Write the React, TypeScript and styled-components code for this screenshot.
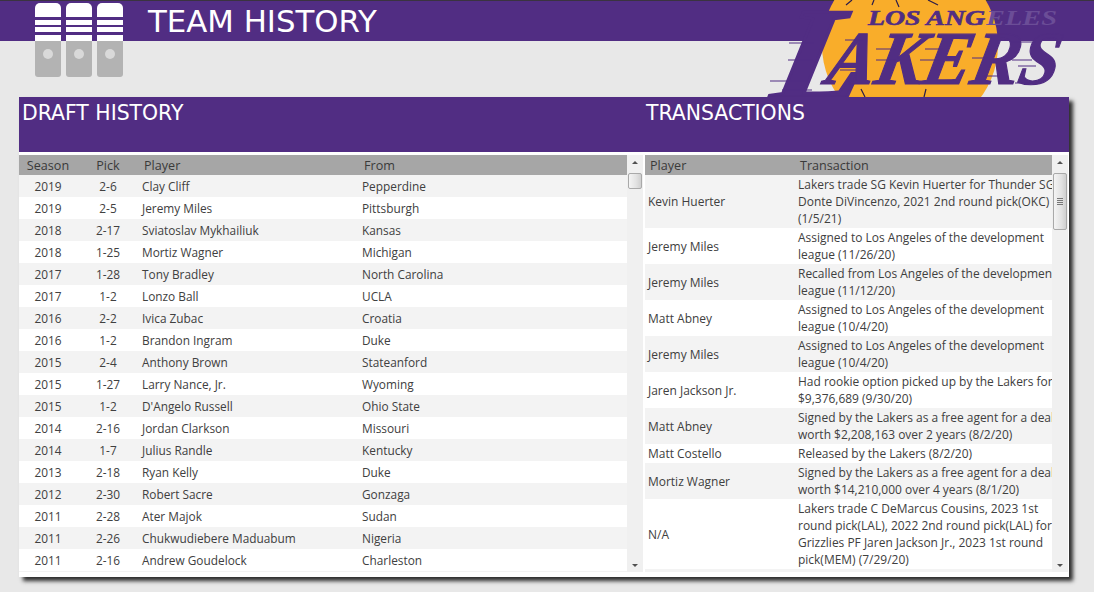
import React from "react";
import styled, { createGlobalStyle } from "styled-components";

const PURPLE = "#512d83";
const FAINT = "#6b4d97";
const TEXT = "#404040";

const Global = createGlobalStyle`
  html, body { margin: 0; padding: 0; background: #e8e8e8; }
  body { width: 1094px; height: 592px; overflow: hidden; font-family: "Open Sans", "Liberation Sans", sans-serif; color: ${TEXT}; }
`;

const Page = styled.div`
  position: relative;
  width: 1094px;
  height: 592px;
  overflow: hidden;
`;

const TopBar = styled.header`
  box-sizing: border-box;
  height: 41px;
  background: ${PURPLE};
  border-top: 1px solid #3a3340;
  padding-left: 148px;
  display: flex;
  align-items: flex-start;
`;

const PageTitle = styled.h1`
  margin: 0;
  font-family: "DejaVu Sans", "Open Sans", sans-serif;
  font-weight: 400;
  font-size: 30.8px;
  line-height: 40px;
  color: #fff;
`;

const IconWrap = styled.div`
  position: absolute;
  left: 35px;
  top: 3px;
  width: 89px;
  height: 74px;
`;

const LogoWrap = styled.div`
  position: absolute;
  left: 760px;
  top: 0;
  width: 334px;
  height: 110px;
`;

const Panel = styled.main`
  position: relative;
  box-sizing: border-box;
  margin: 56px 0 0 19px;
  width: 1050px;
  height: 480px;
  background: #fff;
  box-shadow: 4px 4px 4px #2e2e2e;
`;

const Band = styled.div`
  display: grid;
  grid-template-columns: 626px 1fr;
  height: 55px;
  margin-bottom: 3px;
  background: ${PURPLE};
`;

const BandTitle = styled.h2<{ $pad: number }>`
  margin: 0;
  padding-left: ${(p) => p.$pad}px;
  font-family: "DejaVu Sans", "Open Sans", sans-serif;
  font-weight: 400;
  font-size: 20.4px;
  line-height: 32px;
  color: #fff;
`;

const Tables = styled.div`
  display: grid;
  grid-template-columns: 624px 2px 423px;
  height: 417px;
`;

const Section = styled.section`
  display: flex;
  height: 417px;
  overflow: hidden;
`;

const TableArea = styled.div`
  flex: 1;
  min-width: 0;
  overflow: hidden;
`;

const HeadRow = styled.div<{ $cols: string }>`
  display: grid;
  grid-template-columns: ${(p) => p.$cols};
  height: 20px;
  background: #a6a6a6;
  font-size: 12.6px;
  line-height: 21px;
  color: #3a3a3a;
`;

const HeadCell = styled.div<{ $center?: boolean }>`
  padding-left: ${(p) => (p.$center ? 0 : 5)}px;
  text-align: ${(p) => (p.$center ? "center" : "left")};
`;

const Row = styled.div<{ $cols: string; $alt: boolean }>`
  display: grid;
  grid-template-columns: ${(p) => p.$cols};
  align-items: center;
  background: ${(p) => (p.$alt ? "#f3f3f3" : "#fff")};
  line-height: 17px;
  color: ${TEXT};
  overflow: hidden;
`;

const DraftRow = styled(Row)`
  height: 22px;
  font-size: 11.85px;
`;

const TxRow = styled(Row)`
  padding: 1px 0;
  font-size: 11.97px;
`;

const Cell = styled.div<{ $center?: boolean }>`
  padding-left: ${(p) => (p.$center ? 0 : 3)}px;
  text-align: ${(p) => (p.$center ? "center" : "left")};
  white-space: nowrap;
  overflow: hidden;
`;

const Line = styled.div`
  white-space: nowrap;
`;

const Filler = styled.div<{ $h: number }>`
  height: ${(p) => p.$h}px;
  background: #f3f3f3;
`;

const Track = styled.div`
  position: relative;
  flex: 0 0 16px;
  height: 417px;
  background: #f0f0f0;
`;

const Arrow = styled.div<{ $down?: boolean }>`
  position: absolute;
  ${(p) => (p.$down ? "bottom: 5px;" : "top: 6px;")}
  left: 5px;
  width: 0;
  height: 0;
  border-left: 3px solid transparent;
  border-right: 3px solid transparent;
  ${(p) => (p.$down ? "border-top: 3px solid #505050;" : "border-bottom: 3px solid #505050;")}
`;

const Thumb = styled.div<{ $h: number }>`
  position: absolute;
  top: 18px;
  left: 1px;
  box-sizing: border-box;
  width: 14px;
  height: ${(p) => p.$h}px;
  border: 1px solid #a9a9a9;
  border-radius: 2px;
  background: linear-gradient(to right, #f4f4f4, #e2e2e2 60%, #cfcfcf);
  display: flex;
  flex-direction: column;
  justify-content: center;
  align-items: center;
  gap: 1px;
`;

const Grip = styled.span`
  display: block;
  width: 6px;
  height: 1px;
  background: #777;
`;

const draft: [string, string, string, string][] = [
  ["2019", "2-6", "Clay Cliff", "Pepperdine"],
  ["2019", "2-5", "Jeremy Miles", "Pittsburgh"],
  ["2018", "2-17", "Sviatoslav Mykhailiuk", "Kansas"],
  ["2018", "1-25", "Mortiz Wagner", "Michigan"],
  ["2017", "1-28", "Tony Bradley", "North Carolina"],
  ["2017", "1-2", "Lonzo Ball", "UCLA"],
  ["2016", "2-2", "Ivica Zubac", "Croatia"],
  ["2016", "1-2", "Brandon Ingram", "Duke"],
  ["2015", "2-4", "Anthony Brown", "Stateanford"],
  ["2015", "1-27", "Larry Nance, Jr.", "Wyoming"],
  ["2015", "1-2", "D'Angelo Russell", "Ohio State"],
  ["2014", "2-16", "Jordan Clarkson", "Missouri"],
  ["2014", "1-7", "Julius Randle", "Kentucky"],
  ["2013", "2-18", "Ryan Kelly", "Duke"],
  ["2012", "2-30", "Robert Sacre", "Gonzaga"],
  ["2011", "2-28", "Ater Majok", "Sudan"],
  ["2011", "2-26", "Chukwudiebere Maduabum", "Nigeria"],
  ["2011", "2-16", "Andrew Goudelock", "Charleston"],
];

const tx: [string, string[]][] = [
  ["Kevin Huerter", ["Lakers trade SG Kevin Huerter for Thunder SG", "Donte DiVincenzo, 2021 2nd round pick(OKC)", "(1/5/21)"]],
  ["Jeremy Miles", ["Assigned to Los Angeles of the development", "league (11/26/20)"]],
  ["Jeremy Miles", ["Recalled from Los Angeles of the development", "league (11/12/20)"]],
  ["Matt Abney", ["Assigned to Los Angeles of the development", "league (10/4/20)"]],
  ["Jeremy Miles", ["Assigned to Los Angeles of the development", "league (10/4/20)"]],
  ["Jaren Jackson Jr.", ["Had rookie option picked up by the Lakers for", "$9,376,689 (9/30/20)"]],
  ["Matt Abney", ["Signed by the Lakers as a free agent for a deal", "worth $2,208,163 over 2 years (8/2/20)"]],
  ["Matt Costello", ["Released by the Lakers (8/2/20)"]],
  ["Mortiz Wagner", ["Signed by the Lakers as a free agent for a deal", "worth $14,210,000 over 4 years (8/1/20)"]],
  ["N/A", ["Lakers trade C DeMarcus Cousins, 2023 1st", "round pick(LAL), 2022 2nd round pick(LAL) for", "Grizzlies PF Jaren Jackson Jr., 2023 1st round", "pick(MEM) (7/29/20)"]],
];

const DRAFT_COLS = "58px 62px 220px 1fr";
const TX_COLS = "150px 257px";

const LockerIcon = () => (
  <svg width="89" height="74" viewBox="0 0 89 74">
    {[0, 31, 62].map((x) => (
      <g key={x}>
        <path d={`M${x} 38V5a5 5 0 0 1 5-5h16a5 5 0 0 1 5 5v33z`} fill="#fff" />
        <rect x={x} y="14" width="26" height="3" fill={PURPLE} />
        <rect x={x} y="22" width="26" height="2" fill={PURPLE} />
        <rect x={x} y="29" width="26" height="3" fill={PURPLE} />
        <path d={`M${x} 38h26v33a3 3 0 0 1-3 3H${x + 3}a3 3 0 0 1-3-3z`} fill="#b3b3b3" />
        <circle cx={x + 13} cy="51" r="5" fill="#d9d9d9" />
      </g>
    ))}
  </svg>
);

const speedOuter = [
  [29, 43, 25], [10, 81, 40], [22, 90, 30], [28, 60, 25],
  [85, 40, 18], [116, 49, 20], [116, 60, 20], [80, 70, 16], [165, 49, 18], [160, 60, 20],
  [212, 58, 16], [250, 42, 26], [252, 60, 20], [258, 66, 18], [224, 76, 16], [255, 83, 18],
];

const serif = "'Liberation Serif', serif";

const LakersLogo = () => (
  <svg width="334" height="110" viewBox="0 0 334 110">
    <circle cx="150" cy="45" r="88" fill="#f9ad2a" />
    <path d="M92 0l-6 5M114 0l-2 5M136 0l3 7M168 0l10 5M101 89l4 8M166 89l-2 8" stroke="#2c1d4a" strokeWidth="1.2" />
    <path d="M56 12h20M52 18h18" stroke={FAINT} strokeWidth="1.5" />
    <text x="108" y="25" fontFamily={serif} fontWeight="700" fontStyle="italic" fontSize="21"
      textLength="117" lengthAdjust="spacingAndGlyphs" fill={PURPLE} stroke={PURPLE} strokeWidth="0.6">LOS ANG</text>
    <text x="226" y="25" fontFamily={serif} fontWeight="700" fontStyle="italic" fontSize="21"
      textLength="71" lengthAdjust="spacingAndGlyphs" fill={FAINT}>ELES</text>
    <g transform="skewX(-12)">
      <text x="30" y="100" fontFamily={serif} fontWeight="700" fontStyle="italic" fontSize="134"
        textLength="90" lengthAdjust="spacingAndGlyphs" fill={PURPLE} stroke={PURPLE} strokeWidth="3">L</text>
      <text x="82" y="84" fontFamily={serif} fontWeight="700" fontStyle="italic" fontSize="76"
        textLength="232" lengthAdjust="spacingAndGlyphs" fill={PURPLE} stroke={PURPLE} strokeWidth="1.2">AKERS</text>
    </g>
    <g stroke={PURPLE} strokeWidth="1">
      {speedOuter.map(([x, y, w], i) => (
        <path key={i} d={`M${x} ${y}h${w}`} />
      ))}
    </g>
  </svg>
);

export default function App() {
  return (
    <Page>
      <Global />
      <TopBar>
        <PageTitle>TEAM HISTORY</PageTitle>
      </TopBar>
      <LogoWrap>
        <LakersLogo />
      </LogoWrap>
      <IconWrap>
        <LockerIcon />
      </IconWrap>
      <Panel>
        <Band>
          <BandTitle $pad={3}>DRAFT HISTORY</BandTitle>
          <BandTitle $pad={1}>TRANSACTIONS</BandTitle>
        </Band>
        <Tables>
          <Section>
            <TableArea>
              <HeadRow $cols={DRAFT_COLS}>
                <HeadCell $center>Season</HeadCell>
                <HeadCell $center>Pick</HeadCell>
                <HeadCell>Player</HeadCell>
                <HeadCell>From</HeadCell>
              </HeadRow>
              {draft.map((d, i) => (
                <DraftRow key={i} $cols={DRAFT_COLS} $alt={i % 2 === 0}>
                  <Cell $center>{d[0]}</Cell>
                  <Cell $center>{d[1]}</Cell>
                  <Cell>{d[2]}</Cell>
                  <Cell>{d[3]}</Cell>
                </DraftRow>
              ))}
              <Filler $h={2} />
            </TableArea>
            <Track>
              <Arrow />
              <Thumb $h={16} />
              <Arrow $down />
            </Track>
          </Section>
          <div />
          <Section>
            <TableArea>
              <HeadRow $cols={TX_COLS}>
                <HeadCell>Player</HeadCell>
                <HeadCell>Transaction</HeadCell>
              </HeadRow>
              {tx.map((t, i) => (
                <TxRow key={i} $cols={TX_COLS} $alt={i % 2 === 0}>
                  <Cell>{t[0]}</Cell>
                  <Cell>
                    {t[1].map((l, j) => (
                      <Line key={j}>{l}</Line>
                    ))}
                  </Cell>
                </TxRow>
              ))}
              <Filler $h={3} />
            </TableArea>
            <Track>
              <Arrow />
              <Thumb $h={57}>
                <Grip />
                <Grip />
                <Grip />
                <Grip />
              </Thumb>
              <Arrow $down />
            </Track>
          </Section>
        </Tables>
      </Panel>
    </Page>
  );
}
